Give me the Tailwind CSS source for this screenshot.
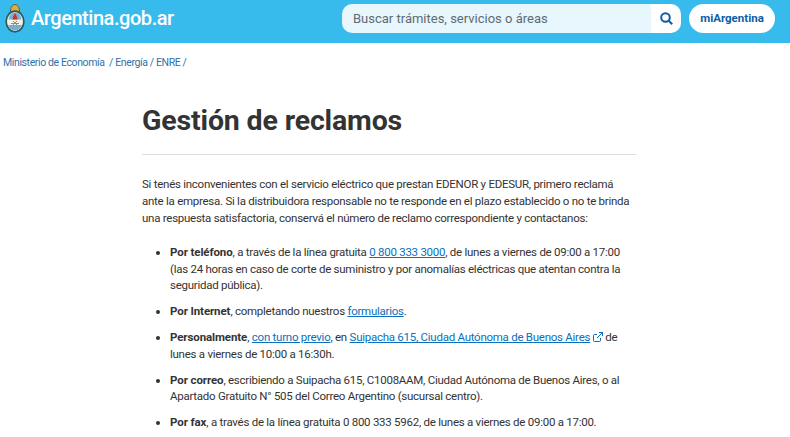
<!DOCTYPE html>
<html lang="es"><head><meta charset="utf-8"><script src="https://cdn.jsdelivr.net/npm/@tailwindcss/browser@4"></script></head>
<body class="h-[437px] overflow-hidden bg-white font-['Roboto',sans-serif] text-[#333]">
<header class="h-[43px] bg-[#37bbed] flex items-center pl-[5px] pr-[15px] pb-[7px]">
<svg class="w-[20px] h-[29px]" viewBox="0 0 20 29"><path d="M5.500 7.500C5.500 3 7.500.5 10 .5s4.500 2.500 4.500 7z" fill="#d9ae3c" stroke="#5a5a3a" stroke-width="1"/><ellipse cx="10" cy="17.500" rx="8.800" ry="10.300" fill="#e9f2f4" stroke="#2f5a5c" stroke-width="1.800"/><path d="M2.500 16h15v2.500c-.5 4.500-3.500 8-7.500 8s-7-3.500-7.500-8z" fill="#f4f1e4"/><path d="M3 21h14c-1 3.500-3.700 5.500-7 5.500S4 24.500 3 21z" fill="#6fb1d6"/><path d="M3.500 15.500c.8-4.500 3-7 6.500-7s5.700 2.500 6.500 7z" fill="#72b3d6"/><path d="M7.500 15.500c.2-2.500 1-4 2.500-6.500 1.500 2.500 2.300 4 2.500 6.500z" fill="#c8352c"/><path d="M6 19.500h8M8 17l4 4M12 17l-4 4" stroke="#9a8f70" stroke-width="1"/></svg>
<span class="ml-[6px] text-[20px] leading-none text-white font-medium tracking-[-0.45px]">Argentina.gob.ar</span>
<div class="ml-auto flex h-[29px] w-[339px] rounded-[10px] overflow-hidden">
<div class="w-[309px] bg-[#e8f6fd] pl-[11px] text-[13px] leading-[29px] text-[#5f6b73]">Buscar trámites, servicios o áreas</div>
<div class="flex-1 bg-white flex items-center justify-center pl-[1px]"><svg class="w-[13px] h-[13px]" viewBox="0 0 13 13" fill="none" stroke="#0a5ea8" stroke-width="2"><circle cx="5.500" cy="5.500" r="4.300"/><path d="M8.700 8.700l3.500 3.500"/></svg></div>
</div>
<div class="ml-[8px] h-[29px] w-[86px] rounded-[15px] bg-white text-center text-[11.500px] leading-[29px] font-bold text-[#0a5ea8]">miArgentina</div>
</header>
<nav class="pl-[3px] pt-[12px] text-[10.500px] leading-[15px] tracking-[-0.38px] text-[#2f72ac] whitespace-pre">Ministerio de Economía  / Energía / ENRE /</nav>
<main class="w-[494px] ml-[142px]">
<h1 class="mt-[33px] text-[28.500px] leading-[36px] font-bold tracking-[-0.15px] text-[#333]">Gestión de reclamos</h1>
<hr class="mt-[15px] border-[#ddd]">
<p class="mt-[21px] text-[11.500px] leading-[17px] tracking-[-0.26px]">Si tenés inconvenientes con el servicio eléctrico que prestan EDENOR y EDESUR, primero reclamá ante la empresa. Si la distribuidora responsable no te responde en el plazo establecido o no te brinda una respuesta satisfactoria, conservá el número de reclamo correspondiente y contactanos:</p>
<ul class="mt-[17px] pl-[28px] list-disc text-[11.500px] leading-[16.600px] tracking-[-0.26px] flex flex-col gap-[9.400px]">
<li><b class="font-bold tracking-[-0.1px]">Por teléfono</b>, a través de la línea gratuita <a class="text-[#0a6fc0] underline">0 800 333 3000</a>, de lunes a viernes de 09:00 a 17:00 (las 24 horas en caso de corte de suministro y por anomalías eléctricas que atentan contra la seguridad pública).</li>
<li><b class="font-bold tracking-[-0.1px]">Por Internet</b>, completando nuestros <a class="text-[#0a6fc0] underline">formularios</a>.</li>
<li><b class="font-bold tracking-[-0.1px]">Personalmente</b>, <a class="text-[#0a6fc0] underline">con turno previo</a>, en <a class="text-[#0a6fc0] underline">Suipacha 615, Ciudad Autónoma de Buenos Aires</a> <svg class="inline w-[10px] h-[10px] align-[-1px]" viewBox="0 0 10 10" fill="none" stroke="#0a6fc0" stroke-width="1"><path d="M7.500 6v2.500a1 1 0 0 1-1 1h-5a1 1 0 0 1-1-1v-5a1 1 0 0 1 1-1H4M6 .5h3.500V4M9.500.5L4 6"/></svg> de lunes a viernes de 10:00 a 16:30h.</li>
<li><b class="font-bold tracking-[-0.1px]">Por correo</b>, escribiendo a Suipacha 615, C1008AAM, Ciudad Autónoma de Buenos Aires, o al Apartado Gratuito N° 505 del Correo Argentino (sucursal centro).</li>
<li><b class="font-bold tracking-[-0.1px]">Por fax</b>, a través de la línea gratuita 0 800 333 5962, de lunes a viernes de 09:00 a 17:00.</li>
</ul>
</main>
</body></html>
